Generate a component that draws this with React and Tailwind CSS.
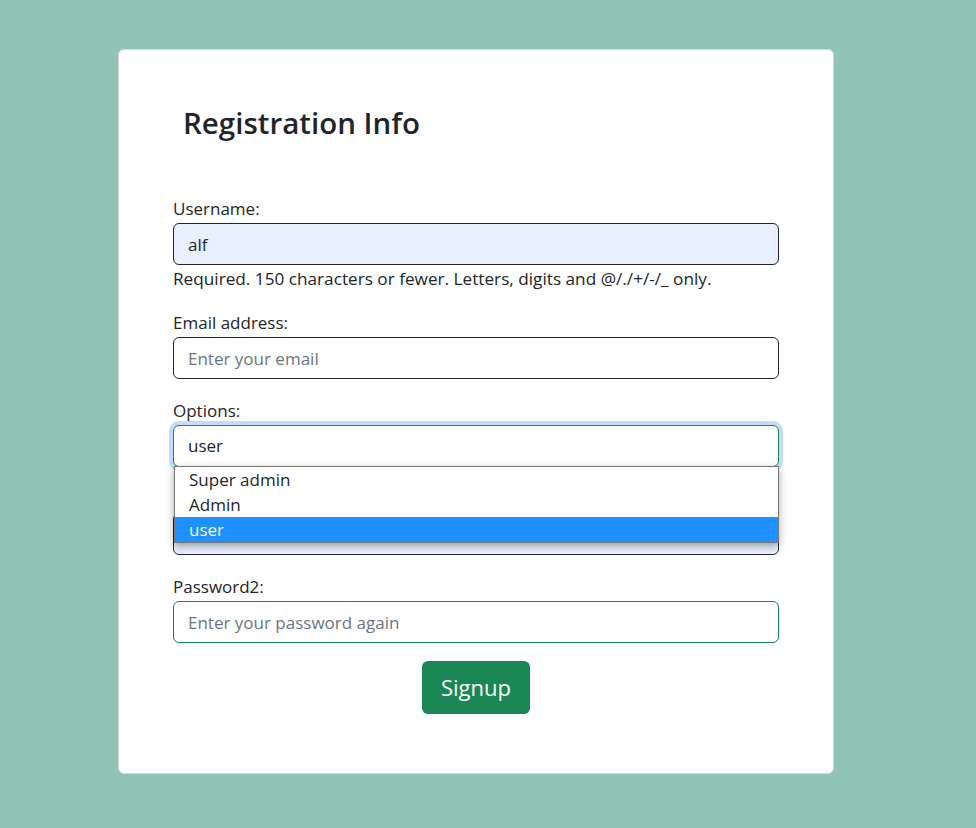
import React from 'react'

const fieldClass =
    'block w-full h-[42px] px-[14px] rounded-[6px] border text-[17px] text-[#212529] placeholder:text-[#6c757d] outline-none'

function Label({ children, className = '' }) {
    return <label className={'block h-6 leading-5 text-[17px] text-[#212529] ' + className}>{children}</label>
}

export default function App() {
    return (
        <div className="min-h-screen bg-[#90c4b6] pt-[49px] font-['Open_Sans','Liberation_Sans',sans-serif]">
            <div className="ml-[118px] w-[716px] bg-white border border-[#d6d6d6] rounded-[6px] px-[54px] pt-[54px] pb-[59px]">
                <h2 className="h-[38px] leading-[38px] pl-[10px] text-[29.5px] font-semibold text-[#212529]">
                    Registration Info
                </h2>

                <form className="mt-[57px]" onSubmit={(e) => e.preventDefault()}>
                    <Label>Username:</Label>
                    <input
                        className={fieldClass + ' bg-[#e8f0fe] border-[#212529]'}
                        defaultValue="alf"
                    />
                    <div className="mt-[2px] h-6 leading-6 text-[17.2px] text-[#212529]">
                        Required. 150 characters or fewer. Letters, digits and @/./+/-/_ only.
                    </div>

                    <Label className="mt-[22px]">Email address:</Label>
                    <input className={fieldClass + ' bg-white border-[#212529]'} placeholder="Enter your email" />

                    <Label className="mt-[22px]">Options:</Label>
                    <div className="relative">
                        <div className="h-[42px] px-[14px] flex items-center rounded-[6px] border border-[#198754] bg-white text-[17px] text-[#212529] shadow-[0_0_0_4px_rgba(13,110,253,0.25)]">
                            user
                        </div>
                        <ul className="absolute z-10 left-px top-[41px] w-[605px] bg-white border border-[#767676] shadow-[0_3px_8px_rgba(0,0,0,0.35)] text-[17px] text-[#212529]">
                            <li className="h-[25px] leading-[25px] px-[14px]">Super admin</li>
                            <li className="h-[25px] leading-[25px] px-[14px]">Admin</li>
                            <li className="h-[25px] leading-[25px] px-[14px] bg-[#1e90ff] text-white">user</li>
                        </ul>
                    </div>

                    <Label className="mt-[22px]">Password:</Label>
                    <input type="password" className={fieldClass + ' bg-[#e8f0fe] border-[#212529]'} />

                    <Label className="mt-[22px]">Password2:</Label>
                    <input
                        type="password"
                        className={fieldClass + ' h-[41px] bg-white border-[#198754]'}
                        placeholder="Enter your password again"
                    />

                    <div className="mt-[18px] flex justify-center">
                        <button className="w-[108px] h-[53px] rounded-[6px] bg-[#198754] text-white text-[22px]">
                            Signup
                        </button>
                    </div>
                </form>
            </div>
        </div>
    )
}
